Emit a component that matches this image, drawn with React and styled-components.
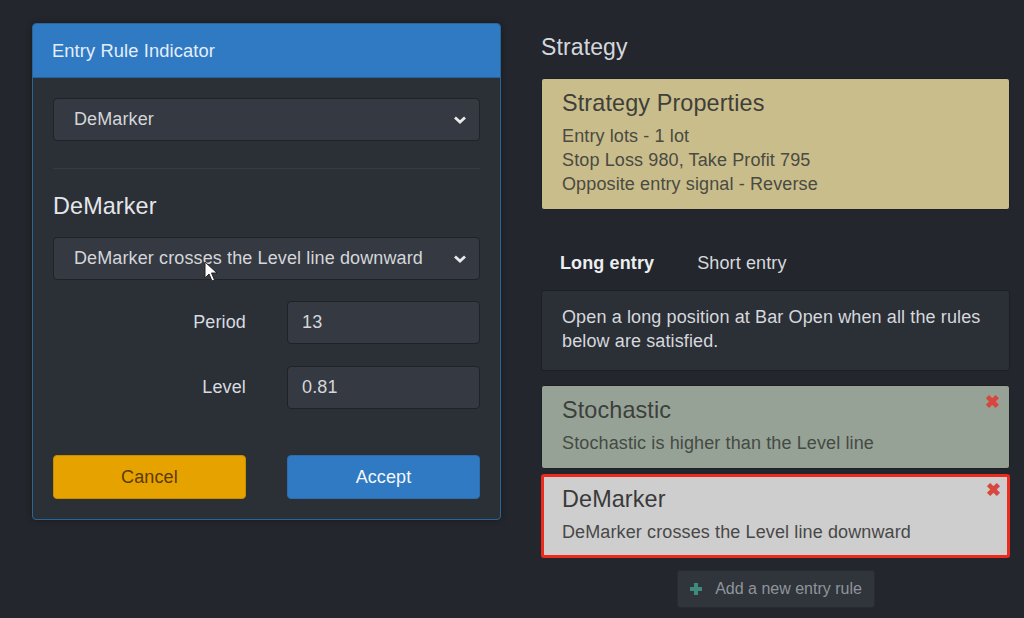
import React from 'react'
import styled, { createGlobalStyle } from 'styled-components'

// global

const GlobalStyle = createGlobalStyle`
  html, body {
    margin: 0;
    padding: 0;
    background: #23262c;
  }
  body {
    font-family: 'Liberation Sans', Arial, Helvetica, sans-serif;
    color: #d3d6db;
    letter-spacing: 0.12px;
  }
`

// layout

const Page = styled.div`
  display: flex;
  gap: 40px;
  padding: 23px 0 0 32px;
  width: 1024px;
  height: 618px;
  box-sizing: border-box;
  overflow: hidden;
  position: relative;
`

const Column = styled.div`
  width: 469px;
  display: flex;
  flex-direction: column;
`

// left: modal

const Modal = styled.div`
  width: 469px;
  align-self: flex-start;
  border: 1px solid #2b6597;
  border-radius: 4px;
  background: #2b2f36;
  box-sizing: border-box;
  overflow: hidden;
  box-shadow: 0 0 6px rgba(0, 0, 0, 0.35);
`

const ModalHeader = styled.div`
  height: 54px;
  display: flex;
  align-items: center;
  padding-left: 19px;
  background: #2f7ac2;
  color: #e4eefa;
  font-size: 18.3px;
  border-bottom: 1px solid #25639e;
  box-sizing: border-box;
`

const ModalBody = styled.div`
  padding: 20px 20px 20px;
  display: flex;
  flex-direction: column;
`

const SelectBox = styled.div`
  height: 43px;
  display: flex;
  align-items: center;
  justify-content: space-between;
  padding: 0 12px 0 20px;
  background: #353941;
  border: 1px solid #1f2227;
  border-radius: 4px;
  box-sizing: border-box;
  font-size: 18px;
  color: #d4d6da;
  margin-top: ${(p) => p.$top || 0}px;
`

const Divider = styled.div`
  height: 1px;
  background: #363a42;
  margin-top: 27px;
`

const IndicatorTitle = styled.div`
  font-size: 23.4px;
  line-height: 26px;
  color: #e4e6ea;
  margin-top: 24px;
`

const FieldRow = styled.div`
  display: grid;
  grid-template-columns: 1fr 1fr;
  column-gap: 41px;
  align-items: center;
  margin-top: ${(p) => p.$top}px;
`

const FieldLabel = styled.label`
  text-align: right;
  font-size: 18px;
  color: #d8dbe0;
`

const FieldInput = styled.div`
  height: 43px;
  display: flex;
  align-items: center;
  padding-left: 14px;
  background: #353941;
  border: 1px solid #1f2227;
  border-radius: 4px;
  box-sizing: border-box;
  font-size: 18px;
  color: #d4d6da;
`

const Button = styled.button`
  height: 44px;
  border: 1px solid ${(p) => (p.$kind === 'warn' ? '#c98e00' : '#2a6eaf')};
  border-radius: 4px;
  background: ${(p) => (p.$kind === 'warn' ? '#e6a300' : '#2f7ac2')};
  color: ${(p) => (p.$kind === 'warn' ? '#5c3b04' : '#f2f6fb')};
  font-family: inherit;
  font-size: 18px;
  letter-spacing: 0.12px;
  cursor: pointer;
`

// right: strategy

const SectionTitle = styled.div`
  font-size: 23px;
  line-height: 26px;
  color: #d3d7dd;
  margin-top: 11px;
`

const Card = styled.div`
  position: relative;
  margin-top: ${(p) => p.$top}px;
  padding: ${(p) => (p.$selected ? '9px 18px 11px' : '11px 20px 13px')};
  background: ${(p) => p.$bg};
  border: ${(p) => (p.$selected ? '3px solid #ec2a1d' : '1px solid #1c1f24')};
  border-radius: 3px;
  color: #45463f;
`

const CardTitle = styled.div`
  font-size: 23.4px;
  line-height: 26px;
  color: ${(p) => p.$color || '#3f3f39'};
`

const CardLine = styled.div`
  font-size: 18px;
  line-height: 24px;
  color: ${(p) => p.$color || '#4a4a42'};
  margin-top: ${(p) => p.$top || 0}px;
`

const CloseMark = styled.span`
  position: absolute;
  top: ${(p) => (p.$selected ? 4 : 7)}px;
  right: ${(p) => (p.$selected ? 6 : 9)}px;
  color: #d8473d;
  font-size: 18px;
  font-weight: bold;
  line-height: 1;
`

const Tabs = styled.div`
  display: flex;
  margin-top: 33px;
  height: 41px;
  align-items: center;
`

const Tab = styled.div`
  padding: 0 19px;
  font-size: 18px;
  font-weight: ${(p) => (p.$active ? 'bold' : 'normal')};
  color: ${(p) => (p.$active ? '#eceef1' : '#d6d9de')};
  margin-right: ${(p) => (p.$active ? 5 : 0)}px;
`

const InfoBox = styled.div`
  margin-top: 6px;
  padding: 14px 20px 17px;
  background: #2b2f36;
  border: 1px solid #1c1f24;
  border-radius: 3px;
  font-size: 18px;
  line-height: 24px;
  color: #d5d8dd;
`

const AddButton = styled.button`
  align-self: center;
  margin-top: 12px;
  width: 198px;
  height: 38px;
  display: flex;
  align-items: center;
  justify-content: center;
  gap: 12px;
  background: #30343b;
  border: 1px solid #282b31;
  border-radius: 3px;
  color: #8f949b;
  font-family: inherit;
  font-size: 16px;
`

const Cursor = styled.svg`
  position: absolute;
  left: 204px;
  top: 261px;
`

// parts

function Chevron() {
  return (
    <svg width="14" height="10" viewBox="0 0 14 10">
      <path d="M2 2.5 L7 7 L12 2.5" fill="none" stroke="#e8eaee" strokeWidth="2.8" />
    </svg>
  )
}

function Plus() {
  return (
    <svg width="14" height="14" viewBox="0 0 14 14">
      <path d="M7 1 V13 M1 7 H13" stroke="#3f8a7d" strokeWidth="4" />
    </svg>
  )
}

function Field(props) {
  return (
    <FieldRow $top={props.top}>
      <FieldLabel>{props.label}</FieldLabel>
      <FieldInput>{props.value}</FieldInput>
    </FieldRow>
  )
}

export default function App() {
  return (
    <Page>
      <GlobalStyle />

      <Column>
        <Modal>
          <ModalHeader>Entry Rule Indicator</ModalHeader>
          <ModalBody>
            <SelectBox>
              DeMarker
              <Chevron />
            </SelectBox>
            <Divider />
            <IndicatorTitle>DeMarker</IndicatorTitle>
            <SelectBox $top={18}>
              DeMarker crosses the Level line downward
              <Chevron />
            </SelectBox>
            <Field top={21} label="Period" value="13" />
            <Field top={22} label="Level" value="0.81" />
            <FieldRow $top={46}>
              <Button $kind="warn">Cancel</Button>
              <Button>Accept</Button>
            </FieldRow>
          </ModalBody>
        </Modal>
      </Column>

      <Column>
        <SectionTitle>Strategy</SectionTitle>
        <Card $top={18} $bg="#c9bd8b">
          <CardTitle>Strategy Properties</CardTitle>
          <CardLine $top={8}>Entry lots - 1 lot</CardLine>
          <CardLine>Stop Loss 980, Take Profit 795</CardLine>
          <CardLine>Opposite entry signal - Reverse</CardLine>
        </Card>

        <Tabs>
          <Tab $active>Long entry</Tab>
          <Tab>Short entry</Tab>
        </Tabs>

        <InfoBox>
          Open a long position at Bar Open when all the rules below are satisfied.
        </InfoBox>

        <Card $top={14} $bg="#97a296">
          <CardTitle $color="#3c403c">Stochastic</CardTitle>
          <CardLine $top={8} $color="#444a44">
            Stochastic is higher than the Level line
          </CardLine>
          <CloseMark>✖</CloseMark>
        </Card>

        <Card $top={5} $bg="#cecece" $selected>
          <CardTitle $color="#3a3a3a">DeMarker</CardTitle>
          <CardLine $top={8} $color="#484848">
            DeMarker crosses the Level line downward
          </CardLine>
          <CloseMark $selected>✖</CloseMark>
        </Card>

        <AddButton>
          <Plus />
          Add a new entry rule
        </AddButton>
      </Column>

      <Cursor width="14" height="22" viewBox="0 0 14 22">
        <path d="M1 1 L1 17 L5 13 L8 20 L10.5 19 L7.5 12 L13 12 Z" fill="#fff" stroke="#222" strokeWidth="1" />
      </Cursor>
    </Page>
  )
}
